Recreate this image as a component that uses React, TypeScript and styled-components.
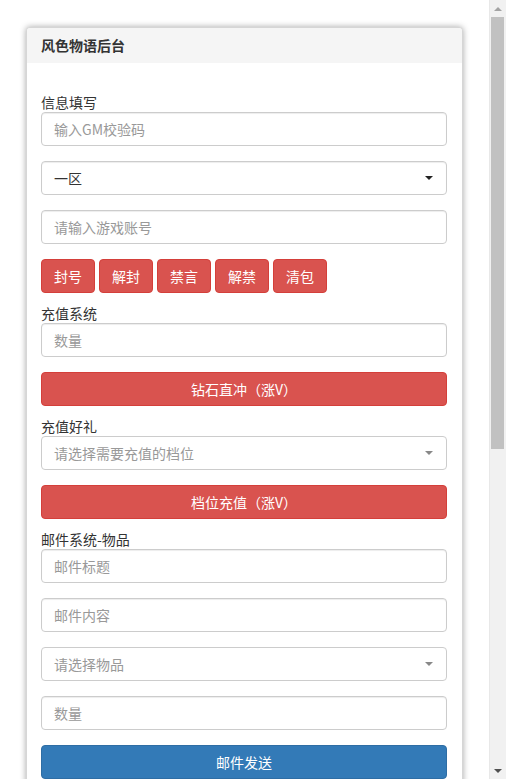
import styled, { createGlobalStyle } from 'styled-components';

const GlobalStyle = createGlobalStyle`
  html, body {
    margin: 0;
    padding: 0;
    background: #ffffff;
  }
  body {
    font-family: "Microsoft YaHei", "Noto Sans CJK SC", "Liberation Sans", sans-serif;
    font-size: 14px;
    line-height: 20px;
    color: #333333;
  }
  * {
    box-sizing: border-box;
  }
`;

// room on the right for the (drawn) window scrollbar
const Page = styled.div`
  padding: 27px 43px 27px 26px;
`;

const ScrollTrack = styled.div`
  position: fixed;
  top: 0;
  right: 0;
  bottom: 0;
  width: 17px;
  display: flex;
  flex-direction: column;
  background: #f1f1f1;
  border-left: 1px solid #e8e8e8;
`;

const ScrollArrow = styled.div<{ $down?: boolean }>`
  flex: 0 0 17px;
  display: flex;
  align-items: center;
  justify-content: center;

  &::after {
    content: '';
    width: 0;
    height: 0;
    border-left: 4px solid transparent;
    border-right: 4px solid transparent;
    ${(p) =>
      p.$down
        ? 'border-top: 4px solid #505050;'
        : 'border-bottom: 4px solid #a3a3a3;'}
  }
`;

const ScrollArea = styled.div`
  flex: 1;
  padding: 0 2px 0 1px;
`;

const ScrollThumb = styled.div`
  height: 432px;
  background: #c1c1c1;
`;

const Panel = styled.div`
  background: #ffffff;
  border: 1px solid #d6d6d6;
  border-radius: 4px;
  box-shadow: 0 0 6px rgba(0, 0, 0, 0.35);
  overflow: hidden;
`;

const PanelHeading = styled.div`
  height: 35px;
  padding: 8px 14px;
  background: #f5f5f5;
  font-weight: bold;
  font-size: 14px;
  line-height: 19px;
  color: #333333;
`;

const PanelBody = styled.div`
  padding: 29px 15px 15px 14px;
`;

const Section = styled.div`
  display: flex;
  flex-direction: column;
`;

const Label = styled.label`
  display: block;
  height: 20px;
  font-size: 14px;
  line-height: 20px;
  color: #333333;
`;

const FieldGroup = styled.div`
  margin-bottom: 15px;
`;

const Input = styled.input`
  display: block;
  width: 100%;
  height: 34px;
  padding: 6px 12px;
  font-family: inherit;
  font-size: 14px;
  line-height: 20px;
  color: #555555;
  background: #ffffff;
  border: 1px solid #cccccc;
  border-radius: 4px;
  box-shadow: inset 0 1px 1px rgba(0, 0, 0, 0.075);
  outline: none;

  &::placeholder {
    color: #999999;
  }
`;

const SelectBox = styled.div<{ $placeholder?: boolean }>`
  position: relative;
  display: flex;
  align-items: center;
  width: 100%;
  height: 34px;
  padding: 6px 12px;
  font-size: 14px;
  line-height: 20px;
  color: ${(p) => (p.$placeholder ? '#999999' : '#333333')};
  background: #ffffff;
  border: 1px solid #cccccc;
  border-radius: 4px;
  box-shadow: ${(p) => (p.$placeholder ? 'none' : 'inset 0 1px 1px rgba(0, 0, 0, 0.075)')};
`;

const Caret = styled.span<{ $light?: boolean }>`
  position: absolute;
  right: 13px;
  top: 50%;
  margin-top: -2px;
  width: 0;
  height: 0;
  border-left: 4px solid transparent;
  border-right: 4px solid transparent;
  border-top: 4px solid ${(p) => (p.$light ? '#888888' : '#222222')};
`;

const ButtonRow = styled.div`
  display: flex;
  gap: 4px;
  margin-bottom: 10px;
`;

const Button = styled.button<{ $variant?: 'danger' | 'primary'; $block?: boolean }>`
  display: block;
  width: ${(p) => (p.$block ? '100%' : 'auto')};
  height: 34px;
  padding: 6px 12px;
  font-family: inherit;
  font-size: 14px;
  line-height: 20px;
  color: #ffffff;
  text-align: center;
  background: ${(p) => (p.$variant === 'primary' ? '#337ab7' : '#d9534f')};
  border: 1px solid ${(p) => (p.$variant === 'primary' ? '#2e6da4' : '#d43f3a')};
  border-radius: 4px;
  cursor: pointer;
`;

const BlockButton = styled(Button)`
  margin-bottom: 10px;
`;

const actions = ['封号', '解封', '禁言', '解禁', '清包'];

export default function App() {
  return (
    <>
      <GlobalStyle />
      <Page>
        <Panel>
          <PanelHeading>风色物语后台</PanelHeading>
          <PanelBody>
            <Section>
              <Label>信息填写</Label>
              <FieldGroup>
                <Input placeholder="输入GM校验码" />
              </FieldGroup>
              <FieldGroup>
                <SelectBox>
                  一区
                  <Caret />
                </SelectBox>
              </FieldGroup>
              <FieldGroup>
                <Input placeholder="请输入游戏账号" />
              </FieldGroup>
            </Section>
            <ButtonRow>
              {actions.map((a) => (
                <Button key={a} $variant="danger">
                  {a}
                </Button>
              ))}
            </ButtonRow>

            <Section>
              <Label>充值系统</Label>
              <FieldGroup>
                <Input placeholder="数量" />
              </FieldGroup>
            </Section>
            <BlockButton $variant="danger" $block>
              钻石直冲（涨V）
            </BlockButton>

            <Section>
              <Label>充值好礼</Label>
              <FieldGroup>
                <SelectBox $placeholder>
                  请选择需要充值的档位
                  <Caret $light />
                </SelectBox>
              </FieldGroup>
            </Section>
            <BlockButton $variant="danger" $block>
              档位充值（涨V）
            </BlockButton>

            <Section>
              <Label>邮件系统-物品</Label>
              <FieldGroup>
                <Input placeholder="邮件标题" />
              </FieldGroup>
              <FieldGroup>
                <Input placeholder="邮件内容" />
              </FieldGroup>
              <FieldGroup>
                <SelectBox $placeholder>
                  请选择物品
                  <Caret $light />
                </SelectBox>
              </FieldGroup>
              <FieldGroup>
                <Input placeholder="数量" />
              </FieldGroup>
            </Section>
            <BlockButton $variant="primary" $block>
              邮件发送
            </BlockButton>

            <Section>
              <Label>邮件系统-货币</Label>
              <FieldGroup>
                <Input placeholder="邮件标题" />
              </FieldGroup>
              <FieldGroup>
                <Input placeholder="邮件内容" />
              </FieldGroup>
              <FieldGroup>
                <SelectBox $placeholder>
                  请选择货币类型
                  <Caret $light />
                </SelectBox>
              </FieldGroup>
              <FieldGroup>
                <Input placeholder="数量" />
              </FieldGroup>
            </Section>
            <BlockButton $variant="primary" $block>
              邮件发送
            </BlockButton>

            <Section>
              <Label>全服公告</Label>
              <FieldGroup>
                <Input placeholder="公告内容" />
              </FieldGroup>
            </Section>
            <BlockButton $variant="primary" $block>
              发送公告
            </BlockButton>
          </PanelBody>
        </Panel>
      </Page>
      <ScrollTrack>
        <ScrollArrow />
        <ScrollArea>
          <ScrollThumb />
        </ScrollArea>
        <ScrollArrow $down />
      </ScrollTrack>
    </>
  );
}
